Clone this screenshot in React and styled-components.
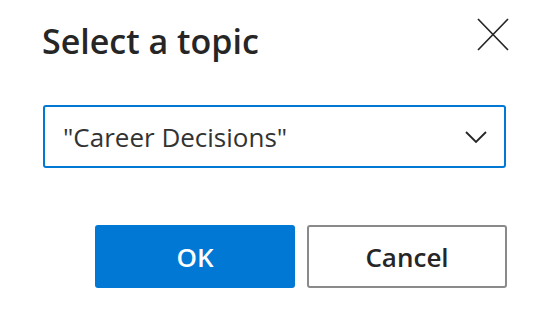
import React from 'react';
import styled, { createGlobalStyle } from 'styled-components';

const GlobalStyle = createGlobalStyle`
  body {
    margin: 0;
    background: #ffffff;
    font-family: "Open Sans", "Noto Sans", Arial, sans-serif;
  }
`;

const Dialog = styled.div`
  width: 550px;
  height: 320px;
  box-sizing: border-box;
  padding: 18px 44px 0 43px;
  display: flex;
  flex-direction: column;
`;

const Header = styled.div`
  display: flex;
  justify-content: space-between;
  align-items: flex-start;
  height: 87px;
`;

const Title = styled.h1`
  margin: 0;
  font-size: 34px;
  line-height: normal;
  font-weight: 600;
  color: #262626;
  margin-left: -1px;
`;

const CloseButton = styled.button`
  border: none;
  background: none;
  padding: 0;
  margin-right: -3px;
  width: 32px;
  height: 33px;
  cursor: pointer;
  color: #262626;
  display: flex;
`;

const Select = styled.div`
  height: 63px;
  box-sizing: border-box;
  border: 2px solid #0078d4;
  border-radius: 3px;
  display: flex;
  align-items: center;
  justify-content: space-between;
  padding: 0 17px 0 18px;
  font-size: 26px;
  color: #333333;
`;

const Actions = styled.div`
  display: flex;
  justify-content: flex-end;
  gap: 12px;
  margin-top: 57px;
  margin-right: -1px;
`;

const Button = styled.button`
  width: 200px;
  height: 63px;
  box-sizing: border-box;
  border-radius: 3px;
  font-family: inherit;
  font-size: 26px;
  font-weight: 600;
  cursor: pointer;
  border: 2px solid ${(p) => (p.$primary ? '#0078d4' : '#8a8a8a')};
  background: ${(p) => (p.$primary ? '#0078d4' : '#ffffff')};
  color: ${(p) => (p.$primary ? '#ffffff' : '#262626')};
`;

export default function App() {
  return (
    <>
      <GlobalStyle />
      <Dialog>
        <Header>
          <Title>Select a topic</Title>
          <CloseButton aria-label="Close">
            <svg width="32" height="33" viewBox="0 0 32 33">
              <path d="M1 1 L31 32 M31 1 L1 32" stroke="currentColor" strokeWidth="1.7" fill="none" />
            </svg>
          </CloseButton>
        </Header>
        <Select>
          <span>"Career Decisions"</span>
          <svg width="22" height="12" viewBox="0 0 22 12">
            <path d="M1 1 L11 11 L21 1" stroke="#262626" strokeWidth="1.8" fill="none" />
          </svg>
        </Select>
        <Actions>
          <Button $primary>OK</Button>
          <Button>Cancel</Button>
        </Actions>
      </Dialog>
    </>
  );
}
